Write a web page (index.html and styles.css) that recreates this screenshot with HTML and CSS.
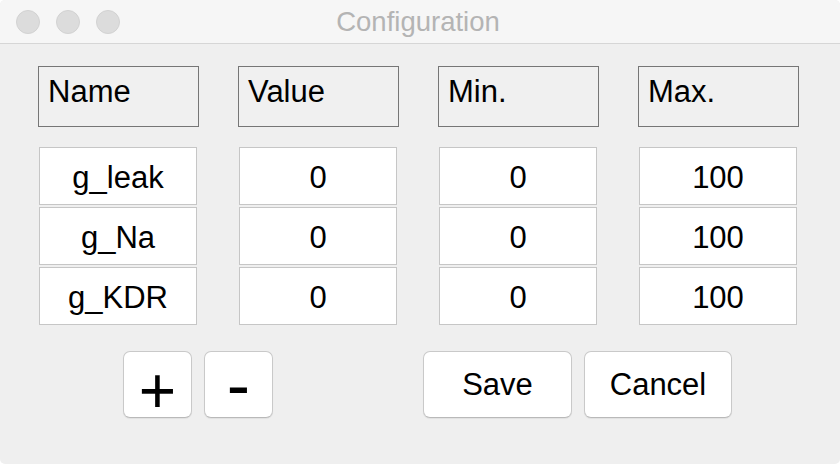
FILE: index.html
```html
<!DOCTYPE html>
<html>
<head>
<meta charset="utf-8">
<link rel="stylesheet" href="styles.css">
</head>
<body>
<div class="window">
  <div class="titlebar">
    <div class="lights">
      <span class="light"></span>
      <span class="light"></span>
      <span class="light"></span>
    </div>
    <div class="title">Configuration</div>
  </div>
  <div class="content">
    <div class="grid">
      <div class="head">Name</div>
      <div class="head">Value</div>
      <div class="head">Min.</div>
      <div class="head">Max.</div>
    </div>
    <div class="grid rows">
      <div class="cell">g_leak</div>
      <div class="cell">0</div>
      <div class="cell">0</div>
      <div class="cell">100</div>
      <div class="cell">g_Na</div>
      <div class="cell">0</div>
      <div class="cell">0</div>
      <div class="cell">100</div>
      <div class="cell">g_KDR</div>
      <div class="cell">0</div>
      <div class="cell">0</div>
      <div class="cell">100</div>
    </div>
    <div class="buttons">
      <button class="btn small plus">+</button>
      <button class="btn small minus">-</button>
      <button class="btn wide save">Save</button>
      <button class="btn wide cancel">Cancel</button>
    </div>
  </div>
</div>
</body>
</html>
```

FILE: styles.css
```css
* { box-sizing: border-box; }
html, body {
  margin: 0;
  padding: 0;
  background: #ffffff;
}
body {
  font-family: "Liberation Sans", Arial, sans-serif;
  color: #000;
}
.window {
  width: 840px;
  height: 464px;
  background: #efefef;
  border-radius: 5px;
  overflow: hidden;
  display: flex;
  flex-direction: column;
}
.titlebar {
  height: 44px;
  background: #f6f6f6;
  border-bottom: 1px solid #d6d6d6;
  display: flex;
  align-items: center;
  position: relative;
}
.lights {
  display: flex;
  gap: 16px;
  padding-left: 16px;
  padding-top: 1px;
}
.light {
  width: 24px;
  height: 24px;
  border-radius: 50%;
  background: #dcdcdc;
  border: 1px solid #d2d2d2;
}
.title {
  position: absolute;
  left: 0;
  right: 0;
  top: 0;
  height: 43px;
  display: flex;
  align-items: center;
  justify-content: center;
  font-size: 27.5px;
  color: #b4b4b4;
  padding-right: 4px;
  padding-top: 1px;
}
.content {
  padding: 22px 0 0 38px;
}
.grid {
  display: grid;
  grid-template-columns: repeat(4, 161px);
  column-gap: 39px;
}
.head {
  height: 61px;
  border: 1px solid #767676;
  background: #f0f0f0;
  font-size: 31px;
  padding: 7px 0 0 9px;
  line-height: 1.15;
}
.rows {
  margin-top: 20px;
  row-gap: 2px;
}
.cell {
  margin-left: 1px;
  width: 158px;
  height: 58px;
  background: #fff;
  border: 1px solid #c6c6c6;
  display: flex;
  align-items: center;
  justify-content: center;
  font-size: 31px;
  padding-top: 3px;
}
.buttons {
  display: flex;
  margin-top: 26px;
  padding-left: 85px;
  gap: 12px;
}
.btn {
  height: 67px;
  margin: 0;
  background: #fff;
  border: 1px solid #c9c9c9;
  border-bottom-color: #b9b9b9;
  border-radius: 7px;
  box-shadow: 0 1px 1px rgba(0,0,0,0.06);
  font-family: "Liberation Sans", Arial, sans-serif;
  color: #000;
  display: flex;
  align-items: center;
  justify-content: center;
  padding: 0;
  line-height: 1;
}
.small { width: 69px; }
.plus { font-size: 64px; padding-top: 12px; }
.minus { font-size: 70px; padding-top: 0; }
.wide { font-size: 31px; }
.save { width: 149px; margin-left: 138px; }
.cancel { width: 148px; }
```
